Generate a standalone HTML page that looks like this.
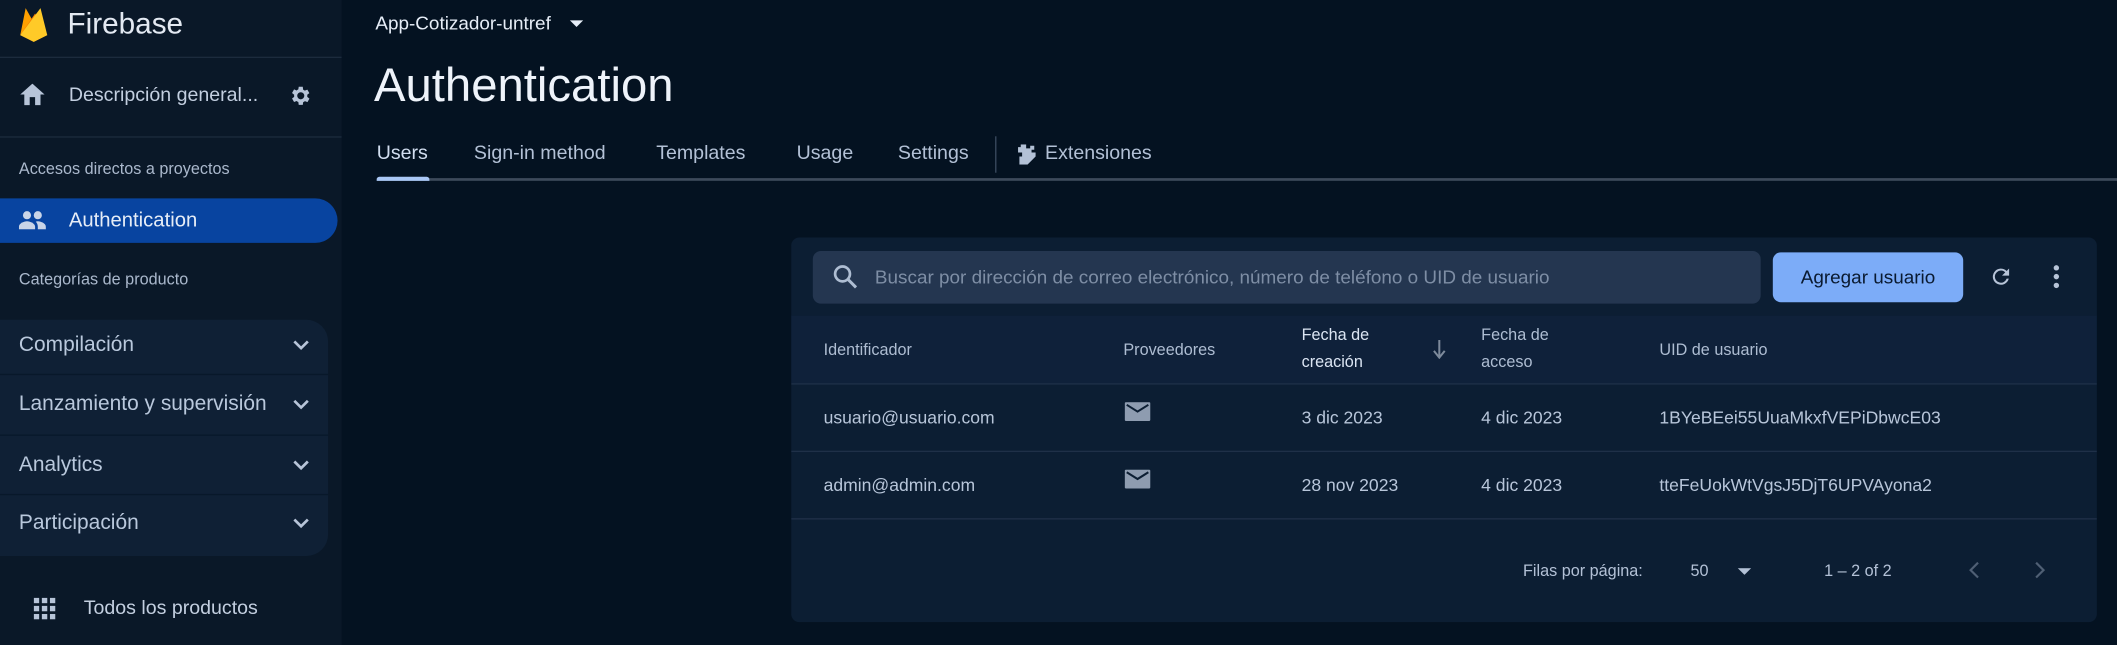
<!DOCTYPE html>
<html><head><meta charset="utf-8"><style>
html,body{margin:0;padding:0;width:2117px;height:645px;overflow:hidden;background:#041221;}
#w{position:absolute;left:0;top:0;width:1568px;height:478px;transform:scale(1.3502,1.3494);transform-origin:0 0;font-family:"Liberation Sans",sans-serif;color:#c3cfe0;}
.a{position:absolute;white-space:nowrap;}
#side{position:absolute;left:0;top:0;width:253px;height:478px;background:#0a1828;}
.hr{position:absolute;left:0;width:253px;height:1px;background:#1c2b3d;}
.grp{position:absolute;left:0;top:237px;width:243px;height:175px;background:#0f2035;border-radius:0 16px 16px 0;}
.gi{position:absolute;left:14px;font-size:15.5px;color:#b9c8dc;}
.gsep{position:absolute;left:0;width:243px;height:1px;background:#08182a;}
.chev{position:absolute;left:217px;width:12px;height:8px;}
.tab{position:absolute;top:106px;font-size:14.5px;color:#b3c1d6;}
#card{position:absolute;left:586px;top:176px;width:967px;height:285px;background:#0c1e33;border-radius:6px;overflow:hidden;}
.th{position:absolute;font-size:12px;color:#aebdd2;line-height:20px;}
.td{position:absolute;font-size:13px;color:#b8c6da;}
</style></head><body><div id="w">
<div id="side">
<svg class="a" style="left:14px;top:4px" width="22" height="28" viewBox="0 0 22 28"><path d="M1 22 L5 2 L10 11 Z" fill="#ffa000"/><path d="M1 22 L12 6 L21 22 L11 27 Z" fill="#f57c00"/><path d="M1 22 L16 2 L21 22 L11 27 Z" fill="#ffca28"/></svg>
<div class="a" style="left:50px;top:5px;font-size:22px;color:#e3e9f2">Firebase</div>
<div class="hr" style="top:42px"></div>
<svg class="a" style="left:15px;top:62px" width="18" height="16" viewBox="0 0 18 16"><path d="M7 16V10h4v6h4V8h3L9 0 0 8h3v8z" fill="#b7c4d8"/></svg>
<div class="a" style="left:51px;top:63px;font-size:14.5px;color:#c3cfe0">Descripción general...</div>
<svg class="a" style="left:213px;top:62px" width="18" height="18" viewBox="0 0 24 24"><path fill="#b7c4d8" d="M19.4 13a7.8 7.8 0 0 0 0-2l2.1-1.6-2-3.5-2.5 1a7 7 0 0 0-1.700-1L15 3h-4l-.4 2.7a7 7 0 0 0-1.7 1l-2.5-1-2 3.5L6.5 11a7.8 7.8 0 0 0 0 2l-2.1 1.6 2 3.5 2.5-1a7 7 0 0 0 1.7 1L11 21h4l.4-2.7a7 7 0 0 0 1.7-1l2.5 1 2-3.5zM13 15.5a3.5 3.5 0 1 1 0-7 3.5 3.5 0 0 1 0 7z"/></svg>
<div class="hr" style="top:101px"></div>
<div class="a" style="left:14px;top:118px;font-size:12px;color:#aab8cc">Accesos directos a proyectos</div>
<div class="a" style="left:0;top:147px;width:250px;height:33px;background:#0844a0;border-radius:0 17px 17px 0"></div>
<svg class="a" style="left:14px;top:156px" width="20" height="14" viewBox="0 0 20 14"><circle cx="6" cy="3.5" r="3" fill="#c9d5e8"/><circle cx="14" cy="3.5" r="3" fill="#c9d5e8"/><path d="M0 14v-2c0-2.500 4-4 6-4s6 1.5 6 4v2z" fill="#c9d5e8"/><path d="M12.5 8.2c.6-.1 1.1-.2 1.5-.2 2 0 6 1.5 6 4v2h-6v-2c0-1.5-.6-2.8-1.5-3.8z" fill="#c9d5e8"/></svg>
<div class="a" style="left:51px;top:155px;font-size:15px;color:#e6edf7">Authentication</div>
<div class="a" style="left:14px;top:200px;font-size:12px;color:#aab8cc">Categorías de producto</div>
<div class="grp">
<div class="gi" style="top:10px">Compilación</div>
<div class="gsep" style="top:40px"></div>
<div class="gi" style="top:54px">Lanzamiento y supervisión</div>
<div class="gsep" style="top:85px"></div>
<div class="gi" style="top:99px">Analytics</div>
<div class="gsep" style="top:129px"></div>
<div class="gi" style="top:142px">Participación</div>
<svg class="chev" style="top:15px" viewBox="0 0 12 8"><path d="M1 1l5 5 5-5" stroke="#b7c4d8" stroke-width="2" fill="none"/></svg>
<svg class="chev" style="top:59px" viewBox="0 0 12 8"><path d="M1 1l5 5 5-5" stroke="#b7c4d8" stroke-width="2" fill="none"/></svg>
<svg class="chev" style="top:104px" viewBox="0 0 12 8"><path d="M1 1l5 5 5-5" stroke="#b7c4d8" stroke-width="2" fill="none"/></svg>
<svg class="chev" style="top:147px" viewBox="0 0 12 8"><path d="M1 1l5 5 5-5" stroke="#b7c4d8" stroke-width="2" fill="none"/></svg>
</div>
<svg class="a" style="left:25px;top:443px" width="16" height="16" viewBox="0 0 16 16" fill="#b7c4d8"><rect x="0" y="0" width="4" height="4"/><rect x="6" y="0" width="4" height="4"/><rect x="12" y="0" width="4" height="4"/><rect x="0" y="6" width="4" height="4"/><rect x="6" y="6" width="4" height="4"/><rect x="12" y="6" width="4" height="4"/><rect x="0" y="12" width="4" height="4"/><rect x="6" y="12" width="4" height="4"/><rect x="12" y="12" width="4" height="4"/></svg>
<div class="a" style="left:62px;top:443px;font-size:14.5px;color:#c3cfe0">Todos los productos</div>
</div>

<div class="a" style="left:278px;top:9px;font-size:14px;color:#e6edf7">App-Cotizador-untref</div>
<svg class="a" style="left:422px;top:15px" width="10" height="5" viewBox="0 0 10 5"><path d="M0 0h10L5 5z" fill="#e6edf7"/></svg>
<div class="a" style="left:277px;top:44px;font-size:35px;color:#eef3fa">Authentication</div>
<div class="tab" style="left:279px;color:#d2def0">Users</div>
<div class="tab" style="left:351px">Sign-in method</div>
<div class="tab" style="left:486px">Templates</div>
<div class="tab" style="left:590px">Usage</div>
<div class="tab" style="left:665px">Settings</div>
<div class="a" style="left:737px;top:101px;width:1px;height:27px;background:#3a4a5e"></div>
<svg class="a" style="left:753px;top:107px" width="17" height="15" viewBox="0 0 17 15"><path d="M3 0h4v3h3V1h3v3h-2v2h3v3l-6 6H2V9h2V6H1V2h2z" fill="#b3c1d6"/></svg>
<div class="tab" style="left:774px">Extensiones</div>
<div class="a" style="left:279px;top:132px;width:1289px;height:2px;background:#3d4a5b"></div>
<div class="a" style="left:279px;top:131px;width:39px;height:3px;background:#a9c7f5;border-radius:2px 2px 0 0"></div>

<div id="card">
<div class="a" style="left:16px;top:10px;width:702px;height:39px;background:#243650;border-radius:6px"></div>
<svg class="a" style="left:31px;top:20px" width="18" height="18" viewBox="0 0 18 18"><circle cx="7" cy="7" r="5.5" stroke="#aebdd2" stroke-width="2" fill="none"/><path d="M11 11l6 6" stroke="#aebdd2" stroke-width="2.2"/></svg>
<div class="a" style="left:62px;top:21px;font-size:14px;color:#7e8ea5">Buscar por dirección de correo electrónico, número de teléfono o UID de usuario</div>
<div class="a" style="left:727px;top:11px;width:141px;height:37px;background:#7cacf8;border-radius:6px;color:#0a1a30;font-size:14px;line-height:37px;text-align:center">Agregar usuario</div>
<svg class="a" style="left:887px;top:20px" width="18" height="18" viewBox="0 0 24 24"><path fill="#b7c4d8" d="M17.6 6.4A8 8 0 1 0 19.7 14h-2.1A6 6 0 1 1 12 6c1.7 0 3.1.7 4.2 1.8L13 11h7V4z"/></svg>
<svg class="a" style="left:934px;top:20px" width="6" height="18" viewBox="0 0 6 18" fill="#b7c4d8"><circle cx="3" cy="2.5" r="2"/><circle cx="3" cy="9" r="2"/><circle cx="3" cy="15.5" r="2"/></svg>
<div class="a" style="left:0;top:58px;width:967px;height:50px;background:#0f213a"></div>
<div class="th" style="left:24px;top:73px">Identificador</div>
<div class="th" style="left:246px;top:73px">Proveedores</div>
<div class="th" style="left:378px;top:62px;color:#dbe5f3">Fecha de<br>creación</div>
<svg class="a" style="left:475px;top:76px" width="10" height="14" viewBox="0 0 10 14"><path d="M5 0v12M1 8l4 5 4-5" stroke="#7d8a9b" stroke-width="1.5" fill="none"/></svg>
<div class="th" style="left:511px;top:62px">Fecha de<br>acceso</div>
<div class="th" style="left:643px;top:73px">UID de usuario</div>
<div class="a" style="left:0;top:108px;width:967px;height:1px;background:#1f3048"></div>
<div class="a" style="left:0;top:158px;width:967px;height:1px;background:#1f3048"></div>
<div class="a" style="left:0;top:208px;width:967px;height:1px;background:#1f3048"></div>
<div class="td" style="left:24px;top:126px">usuario@usuario.com</div>
<svg class="a" style="left:247px;top:122px" width="19" height="14" viewBox="0 0 19 14"><rect width="19" height="14" rx="1" fill="#8e9cb0"/><path d="M1.5 2l8 5 8-5" stroke="#0c1e33" stroke-width="1.5" fill="none"/></svg>
<div class="td" style="left:378px;top:126px">3 dic 2023</div>
<div class="td" style="left:511px;top:126px">4 dic 2023</div>
<div class="td" style="left:643px;top:126px">1BYeBEei55UuaMkxfVEPiDbwcE03</div>
<div class="td" style="left:24px;top:176px">admin@admin.com</div>
<svg class="a" style="left:247px;top:172px" width="19" height="14" viewBox="0 0 19 14"><rect width="19" height="14" rx="1" fill="#8e9cb0"/><path d="M1.5 2l8 5 8-5" stroke="#0c1e33" stroke-width="1.5" fill="none"/></svg>
<div class="td" style="left:378px;top:176px">28 nov 2023</div>
<div class="td" style="left:511px;top:176px">4 dic 2023</div>
<div class="td" style="left:643px;top:176px">tteFeUokWtVgsJ5DjT6UPVAyona2</div>
<div class="a" style="left:542px;top:240px;font-size:12px;color:#b3c1d6">Filas por página:</div>
<div class="a" style="left:666px;top:240px;font-size:12px;color:#b3c1d6">50</div>
<svg class="a" style="left:701px;top:245px" width="10" height="5" viewBox="0 0 10 5"><path d="M0 0h10L5 5z" fill="#b3c1d6"/></svg>
<div class="a" style="left:765px;top:240px;font-size:12px;color:#b3c1d6">1 – 2 of 2</div>
<svg class="a" style="left:872px;top:240px" width="8" height="13" viewBox="0 0 8 13"><path d="M7 1L1.5 6.5 7 12" stroke="#4f5f74" stroke-width="1.6" fill="none"/></svg>
<svg class="a" style="left:921px;top:240px" width="8" height="13" viewBox="0 0 8 13"><path d="M1 1l5.5 5.5L1 12" stroke="#4f5f74" stroke-width="1.6" fill="none"/></svg>
</div>
</div></body></html>
